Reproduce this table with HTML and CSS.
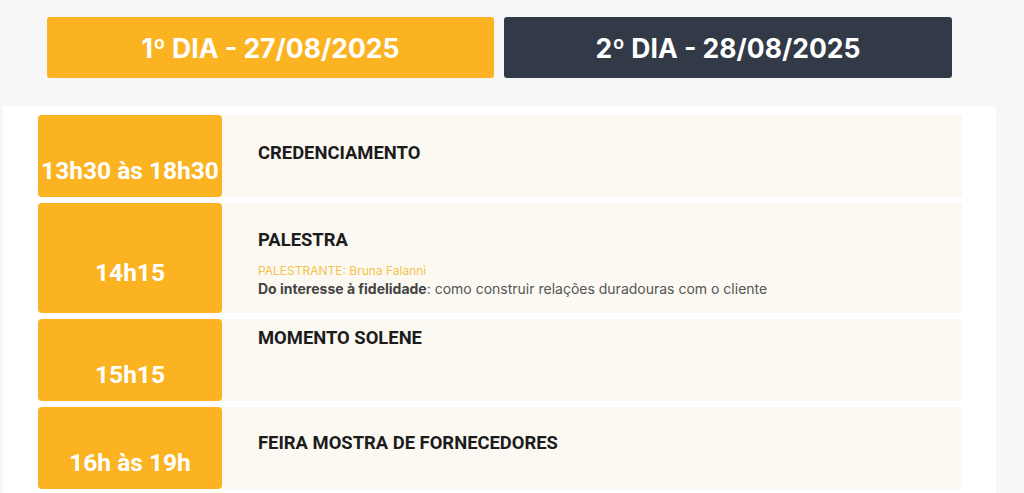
FILE: index.html
```html
<!DOCTYPE html>
<html lang="pt-BR">
<head>
<meta charset="utf-8">
<title>Programação</title>
<link rel="stylesheet" href="styles.css">
</head>
<body>
<div class="page">
  <div class="tabs">
    <div class="tab tab-active">1º DIA - 27/08/2025</div>
    <div class="tab tab-dark">2º DIA - 28/08/2025</div>
  </div>
  <div class="panel">
    <div class="row row-short">
      <div class="time">13h30 às 18h30</div>
      <div class="content content-center">
        <div class="title">CREDENCIAMENTO</div>
      </div>
    </div>
    <div class="row row-tall">
      <div class="time">14h15</div>
      <div class="content content-talk">
        <div class="title">PALESTRA</div>
        <div class="speaker">PALESTRANTE: Bruna Falanni</div>
        <div class="desc"><strong>Do interesse à fidelidade</strong>: como construir relações duradouras com o cliente</div>
      </div>
    </div>
    <div class="row row-short">
      <div class="time">15h15</div>
      <div class="content content-top">
        <div class="title">MOMENTO SOLENE</div>
      </div>
    </div>
    <div class="row row-short">
      <div class="time">16h às 19h</div>
      <div class="content content-center content-low">
        <div class="title">FEIRA MOSTRA DE FORNECEDORES</div>
      </div>
    </div>
  </div>
</div>
</body>
</html>
```

FILE: styles.css
```css
* { box-sizing: border-box; }
html, body { margin: 0; padding: 0; }
body {
  background: #f7f7f7;
  font-family: Roboto, "Liberation Sans", Arial, sans-serif;
  height: 493px;
  overflow: hidden;
}
.page {
  padding: 0 0 0 3px;
  width: 996px;
}
.tabs {
  display: flex;
  gap: 10px;
  padding: 17px 0 0 44px;
  height: 106px;
}
.tab {
  width: 447px;
  height: 61px;
  border-radius: 3px;
  color: #fff;
  font-family: Inter, "Open Sans", sans-serif;
  font-weight: 700;
  font-size: 26.5px;
  display: flex;
  align-items: center;
  justify-content: center;
}
.tab-active { background: #fbb321; }
.tab-dark { background: #323a47; width: 448px; }
.panel {
  background: #fff;
  padding: 9px 34px 10px 35px;
  display: flex;
  flex-direction: column;
  gap: 6px;
}
.row {
  display: flex;
  height: 82px;
}
.row-tall { height: 110px; }
.time {
  width: 184px;
  flex: none;
  background: #fbb321;
  border-radius: 4px;
  color: #fff;
  font-weight: 700;
  font-size: 24.5px;
  display: flex;
  align-items: center;
  justify-content: center;
  padding-top: 28px;
}
.content {
  flex: 1;
  background: #fbf9f2;
  padding-left: 36px;
  display: flex;
  flex-direction: column;
}
.content-center { justify-content: center; padding-bottom: 8px; }
.content-low { padding-bottom: 12px; }
.content-top { padding-top: 8px; }
.content-talk { padding-top: 26px; }
.title {
  font-weight: 700;
  font-size: 18.4px;
  color: #1c1c1c;
}
.speaker {
  margin-top: 13px;
  font-family: Inter, sans-serif;
  font-size: 12px;
  color: #f6c24e;
}
.desc {
  margin-top: 2px;
  font-family: Inter, sans-serif;
  font-size: 14px;
  color: #555;
}
.desc strong { color: #444; font-weight: 700; }
```
